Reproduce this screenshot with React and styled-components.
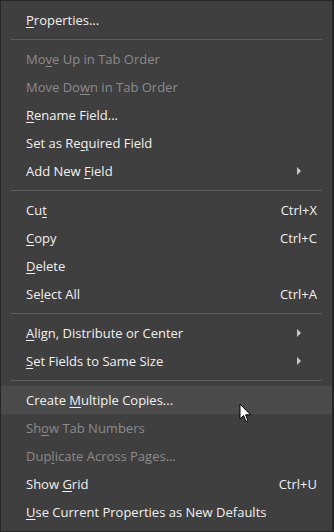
import React from "react";
import styled, { createGlobalStyle } from "styled-components";

const GlobalStyle = createGlobalStyle`
  html, body {
    margin: 0;
    padding: 0;
    background: #3f3f3f;
  }
  body {
    font-family: "Open Sans", "Noto Sans", "Liberation Sans", sans-serif;
  }
`;

const Menu = styled.div`
  position: relative;
  width: 334px;
  height: 532px;
  box-sizing: border-box;
  background: #3f3f3f;
  border: 1px solid #262626;
  border-right-width: 2px;
  padding: 5px 0;
  display: flex;
  flex-direction: column;
  overflow: hidden;
`;

const Item = styled.div`
  display: flex;
  align-items: center;
  height: 28px;
  flex-shrink: 0;
  padding: 0 15px 0 25px;
  font-size: 13px;
  color: ${(p) => (p.disabled ? "#8b8b8b" : "#f1f1f1")};
  background: ${(p) => (p.hover ? "#4b4b4b" : "transparent")};

  u {
    text-decoration-thickness: 1px;
    text-underline-offset: 2px;
  }
`;

const Label = styled.span`
  flex: 1;
  white-space: nowrap;
`;

const Shortcut = styled.span`
  white-space: nowrap;
`;

const Arrow = styled.span`
  width: 0;
  height: 0;
  margin-right: 16px;
  border-top: 4px solid transparent;
  border-bottom: 4px solid transparent;
  border-left: 4px solid #c8c8c8;
`;

const Separator = styled.div`
  height: 11px;
  flex-shrink: 0;
  display: flex;
  align-items: center;
  padding: 0 10px 0 10px;

  &::after {
    content: "";
    flex: 1;
    height: 1px;
    background: #5c5c5c;
  }
`;

const Cursor = styled.svg`
  position: absolute;
  left: 238px;
  top: 402px;
`;

const items = [
  { label: ["", "P", "roperties..."] },
  "sep",
  { label: ["Mo", "v", "e Up in Tab Order"], disabled: true },
  { label: ["Move Do", "w", "n in Tab Order"], disabled: true },
  { label: ["", "R", "ename Field..."] },
  { label: ["Set as Re", "q", "uired Field"] },
  { label: ["Add New ", "F", "ield"], sub: true },
  "sep",
  { label: ["Cu", "t", ""], key: "Ctrl+X" },
  { label: ["", "C", "opy"], key: "Ctrl+C" },
  { label: ["", "D", "elete"] },
  { label: ["Se", "l", "ect All"], key: "Ctrl+A" },
  "sep",
  { label: ["", "A", "lign, Distribute or Center"], sub: true },
  { label: ["", "S", "et Fields to Same Size"], sub: true },
  "sep",
  { label: ["Create ", "M", "ultiple Copies..."], hover: true },
  { label: ["Sh", "o", "w Tab Numbers"], disabled: true },
  { label: ["Dup", "l", "icate Across Pages..."], disabled: true },
  { label: ["Show ", "G", "rid"], key: "Ctrl+U" },
  { label: ["", "U", "se Current Properties as New Defaults"] },
];

export default function App() {
  return (
    <>
      <GlobalStyle />
      <Menu>
        {items.map((it, i) =>
          it === "sep" ? (
            <Separator key={i} />
          ) : (
            <Item key={i} disabled={it.disabled} hover={it.hover}>
              <Label>
                {it.label[0]}
                <u>{it.label[1]}</u>
                {it.label[2]}
              </Label>
              {it.key && <Shortcut>{it.key}</Shortcut>}
              {it.sub && <Arrow />}
            </Item>
          )
        )}
        <Cursor width="13" height="20" viewBox="0 0 13 20">
          <path
            d="M1 1 L1 16 L4.5 12.5 L7 18.5 L9 17.6 L6.6 11.8 L11.5 11.8 Z"
            fill="#ffffff"
            stroke="#000000"
            strokeWidth="1"
            strokeLinejoin="miter"
          />
        </Cursor>
      </Menu>
    </>
  );
}
